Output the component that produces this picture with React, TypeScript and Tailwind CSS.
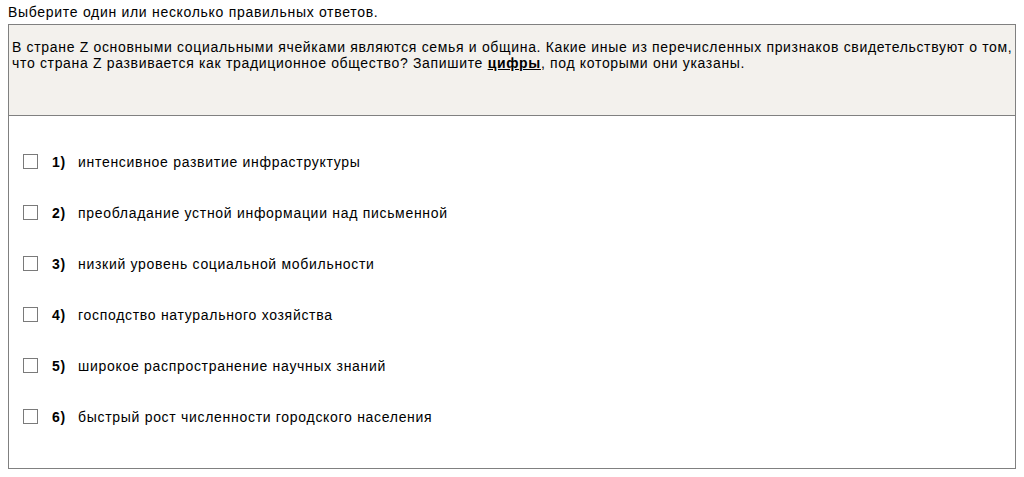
const options = [
  "интенсивное развитие инфраструктуры",
  "преобладание устной информации над письменной",
  "низкий уровень социальной мобильности",
  "господство натурального хозяйства",
  "широкое распространение научных знаний",
  "быстрый рост численности городского населения",
];

export default function App() {
  return (
    <div className="bg-white text-black font-['Liberation_Sans',Arial,sans-serif] text-[14px] leading-[16px] tracking-[0.7px] w-[1024px] h-[477px] overflow-hidden">
      <div className="pl-2 pt-[4px] h-[24px]">Выберите один или несколько правильных ответов.</div>
      <div className="ml-2 w-[1008px] h-[445px] border border-[#808080] flex flex-col">
        <div className="h-[91px] bg-[#f3f1ed] border-b border-[#808080] pl-[3px] pt-[14px] whitespace-nowrap tracking-[0.67px]">
          В стране Z основными социальными ячейками являются семья и община. Какие иные из перечисленных признаков свидетельствуют о том,
          <br />
          что страна Z развивается как традиционное общество? Запишите <b className="underline">цифры</b>, под которыми они указаны.
        </div>
        <div className="flex flex-col pt-[20px]">
          {options.map((text, i) => (
            <label key={i} className="h-[51px] flex items-center pl-[14px]">
              <span className="w-[15px] h-[15px] border border-[#7a7a7a] bg-white shrink-0" />
              <b className="ml-[14px] w-[26px]">{i + 1})</b>
              <span>{text}</span>
            </label>
          ))}
        </div>
      </div>
    </div>
  );
}
